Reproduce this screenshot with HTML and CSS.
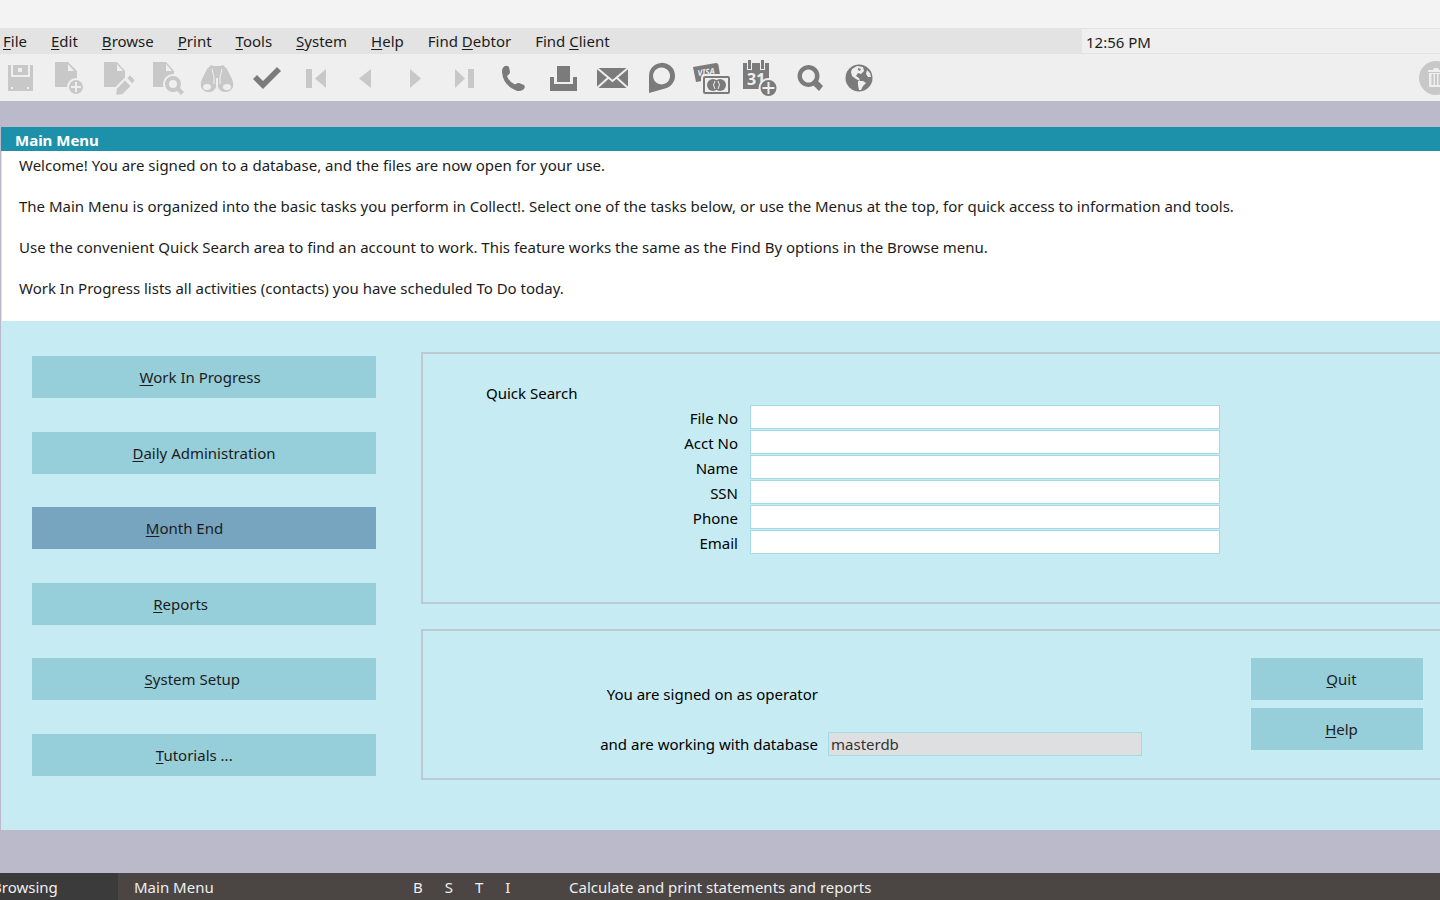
FILE: index.html
```html
<!DOCTYPE html>
<html lang="en">
  <head>
    <meta charset="UTF-8" />
    <meta name="viewport" content="width=device-width, initial-scale=1.0" />
    <title>Main Menu</title>
    <link rel="stylesheet" href="styles.css">
  </head>
  <body>
    <div class="caption"></div>

    <nav class="menu-bar">
      <div class="menu-items">
        <button><u>F</u>ile</button>
        <button><u>E</u>dit</button>
        <button><u>B</u>rowse</button>
        <button><u>P</u>rint</button>
        <button><u>T</u>ools</button>
        <button><u>S</u>ystem</button>
        <button><u>H</u>elp</button>
        <button>Find <u>D</u>ebtor</button>
        <button>Find <u>C</u>lient</button>
      </div>
      <div class="clock">12:56 PM</div>
    </nav>

    <div class="toolbar">
      <div class="tools">
        <button aria-label="Save" disabled>
          <svg viewBox="0 0 34 34">
            <path d="M5 4h25v26H5z" />
            <path class="line" d="M9 4v11h17V4" />
            <path class="bg" d="M15 7h4v4h-4zM8 26h2v2H8zM24 26h2v2h-2z" />
          </svg>
        </button>
        <button aria-label="New" disabled>
          <svg viewBox="0 0 34 34">
            <path d="M3 1h13l9 9v16H3z" />
            <path class="bg" d="M16 3v7h6z" />
            <circle class="edge" cx="24" cy="26" r="8" />
            <path class="line" d="M24 21v10M19 26h10" />
          </svg>
        </button>
        <button aria-label="Modify" disabled>
          <svg viewBox="0 0 34 34">
            <path d="M2 1h13l8 9v16H2z" />
            <path class="bg" d="M15 3v7h6z" />
            <path class="edge" d="M13 35l1-8 9-9 7 7-9 9zM24 17l4-4 6 6-4 5z" />
          </svg>
        </button>
        <button aria-label="View" disabled>
          <svg viewBox="0 0 34 34">
            <path d="M2 1h13l8 9v16H2z" />
            <path class="bg" d="M15 3v7h6z" />
            <circle class="edge" cx="22" cy="23" r="9" />
            <circle class="bg" cx="22" cy="23" r="4" />
            <path d="M28 26l5 5-3 3-5-5z" />
          </svg>
        </button>
        <button aria-label="Find" disabled>
          <svg viewBox="0 0 34 34">
            <path d="M7 8l4-4 5 2v17a7 6 0 0 1-15 3q-1-4 1-8zM27 8l-4-4-5 2v17a7 6 0 0 0 15 3q1-4-1-8z" />
            <path d="M13 5h8v12h-8z" />
            <path class="line thin" d="M12 8l2 8v7M22 8l-2 8v7" />
            <ellipse class="bg" cx="7" cy="26" rx="4" ry="3" />
            <ellipse class="bg" cx="27" cy="26" rx="4" ry="3" />
          </svg>
        </button>
        <button aria-label="Accept">
          <svg viewBox="0 0 34 34">
            <path d="M3 18l4-4 6 6L27 6l4 4-18 18z" />
          </svg>
        </button>
        <button aria-label="First" disabled>
          <svg viewBox="0 0 34 34">
            <path d="M7 8h6v19H7zM16 17.500L27 8v19z" />
          </svg>
        </button>
        <button aria-label="Previous" disabled>
          <svg viewBox="0 0 34 34">
            <path d="M11 17.500L23 8v19z" />
          </svg>
        </button>
        <button aria-label="Next" disabled>
          <svg viewBox="0 0 34 34">
            <path d="M23 17.500L12 8v19z" />
          </svg>
        </button>
        <button aria-label="Last" disabled>
          <svg viewBox="0 0 34 34">
            <path d="M21 8h6v19h-6zM18 17.500L8 8v19z" />
          </svg>
        </button>
        <button aria-label="Phone">
          <svg viewBox="0 0 34 34">
            <path d="M8 5.500Q11 4 13 6l1 5q0 2-3 4 2 6 8 8.500 2-2 4-1.500l5 2q1.500 1.500 0 4-3 3-8 1.500Q7 24 6 11q0-4 2-5.500z" />
          </svg>
        </button>
        <button aria-label="Print">
          <svg viewBox="0 0 34 34">
            <path d="M4 16h27v14H4z" />
            <path class="bg" d="M8 14h19v9H8z" />
            <path d="M11 5h13v16H11z" />
          </svg>
        </button>
        <button aria-label="Email">
          <svg viewBox="0 0 34 34">
            <path d="M2 7h31v20H2z" />
            <path class="line" d="M2 7l15.500 13L33 7M2 27l11-10M33 27L22 17" />
          </svg>
        </button>
        <button aria-label="Chat">
          <svg viewBox="0 0 34 34">
            <path fill-rule="evenodd" d="M5 32V15A13 13 0 1 1 21 27.500zM17.500 6.500a8.500 8.500 0 1 0 .1 0z" />
          </svg>
        </button>
        <button aria-label="Payments">
          <svg viewBox="0 0 34 34">
            <path d="M-1 6l23-4q2 0 2.500 2l2 13L2 21z" />
            <text class="card-text" x="4" y="15" transform="rotate(-8 4 15)">VISA</text>
            <rect class="edge" x="8" y="14" width="29" height="20" rx="3" />
            <rect class="bg" x="11" y="17" width="23" height="14" />
            <circle cx="19" cy="24" r="6" />
            <circle cx="26" cy="24" r="6" />
            <path class="line thin" d="M21 20q-3 4 0 8M24 20q3 4 0 8" />
          </svg>
        </button>
        <button aria-label="Calendar">
          <svg viewBox="0 0 34 34">
            <path d="M0 2h26v26H0z" />
            <path class="bg" d="M4 1h5v8H4zM17 1h5v8h-5z" />
            <path d="M5-1h3v9H5zM18-1h3v9h-3z" />
            <text class="day-text" x="4" y="24">31</text>
            <circle class="edge" cx="25.500" cy="27" r="9" />
            <path class="line" d="M25.500 21v12M19.500 27h12" />
          </svg>
        </button>
        <button aria-label="Search">
          <svg viewBox="0 0 34 34">
            <path fill-rule="evenodd" d="M15.500 4a11 11 0 1 0 .1 0zM15.500 8.500a6.500 6.500 0 1 1-.1 0z" />
            <path d="M24 19l6 6-4 5-7-7z" />
          </svg>
        </button>
        <button aria-label="Web">
          <svg viewBox="0 0 34 34">
            <circle cx="17" cy="17" r="13.500" />
            <path class="bg" d="M10 8l5-3 6 1 1 4-3 3-3-1-2 3 3 2 1 3-4-2-4-3-1-4zM16 20l5 0 3 2-3 3-2 4-2 0-1-5zM25 9l3 3 1 4-3 0-2-3z" />
            <path d="M16 7l3 1-1 2-2-1z" />
          </svg>
        </button>
      </div>
      <button class="trash" aria-label="Delete" disabled>
        <svg viewBox="0 0 34 34">
          <circle cx="17" cy="17" r="17" />
          <path class="bg" d="M9 9h5l1-2h4l1 2h5v2H9zM10 12h14v14H10z" />
          <path class="rib" d="M13.500 13v11M17 13v11M20.500 13v11" />
        </svg>
      </button>
    </div>

    <main class="workspace">
      <section class="window">
        <h1>Main Menu</h1>
        <div class="intro">
          <p>Welcome! You are signed on to a database, and the files are now open for your use.</p>
          <p>The Main Menu is organized into the basic tasks you perform in Collect!. Select one of the tasks below, or use the Menus at the top, for quick access to information and tools.</p>
          <p>Use the convenient Quick Search area to find an account to work. This feature works the same as the Find By options in the Browse menu.</p>
          <p>Work In Progress lists all activities (contacts) you have scheduled To Do today.</p>
        </div>

        <div class="content">
          <!-- labels are padded with trailing spaces, so they sit left of centre -->
          <div class="tasks">
            <button class="btn"><u>W</u>ork In Progress&nbsp;&nbsp;</button>
            <button class="btn"><u>D</u>aily Administration</button>
            <button class="btn active"><u>M</u>onth End&nbsp;&nbsp;&nbsp;&nbsp;&nbsp;&nbsp;&nbsp;&nbsp;&nbsp;&nbsp;</button>
            <button class="btn"><u>R</u>eports&nbsp;&nbsp;&nbsp;&nbsp;&nbsp;&nbsp;&nbsp;&nbsp;&nbsp;&nbsp;&nbsp;&nbsp;</button>
            <button class="btn"><u>S</u>ystem Setup&nbsp;&nbsp;&nbsp;&nbsp;&nbsp;&nbsp;</button>
            <button class="btn"><u>T</u>utorials ...&nbsp;&nbsp;&nbsp;&nbsp;&nbsp;</button>
          </div>

          <div class="panels">
            <form class="panel search">
              <h2>Quick Search</h2>
              <div class="fields">
                <label for="fileNo">File No</label>
                <input type="text" id="fileNo" />
                <label for="acctNo">Acct No</label>
                <input type="text" id="acctNo" />
                <label for="name">Name</label>
                <input type="text" id="name" />
                <label for="ssn">SSN</label>
                <input type="text" id="ssn" />
                <label for="phone">Phone</label>
                <input type="text" id="phone" />
                <label for="email">Email</label>
                <input type="text" id="email" />
              </div>
            </form>

            <div class="panel session">
              <div class="session-info">
                <span>You are signed on as operator</span>
                <span></span>
                <label for="database">and are working with database</label>
                <input type="text" id="database" value="masterdb" readonly />
              </div>
              <div class="session-buttons">
                <button class="btn"><u>Q</u>uit</button>
                <button class="btn"><u>H</u>elp</button>
              </div>
            </div>
          </div>
        </div>
      </section>
    </main>

    <footer class="status-bar">
      <div class="mode">Browsing</div>
      <div class="form-name">Main Menu</div>
      <div class="flags">
        <span>B</span><span>S</span><span>T</span><span>I</span>
      </div>
      <div class="hint">Calculate and print statements and reports</div>
    </footer>
  </body>
</html>
```

FILE: styles.css
```css
* {
  box-sizing: border-box;
}
body {
  margin: 0;
  min-height: 100vh;
  display: flex;
  flex-direction: column;
  overflow-x: hidden;
  background-color: #bbbaca;
  color: #1c1c1c;
  font-family: "Noto Sans", "Open Sans", sans-serif;
  font-size: 15px;
  line-height: 20px;
}
button,
input {
  font: inherit;
  color: inherit;
}
button {
  border: none;
  padding: 0;
  background: none;
}
h1,
h2,
p {
  margin: 0;
}
u {
  text-underline-offset: 2px;
}
.caption {
  height: 28px;
  background-color: #f3f3f3;
}

/* menu */
.menu-bar {
  display: flex;
  height: 26px;
  background-color: #e3e3e3;
}
.menu-items {
  flex: 1;
  display: flex;
  align-items: center;
  gap: 24px;
  padding-left: 3px;
}
.clock {
  width: 358px;
  padding: 3px 4px;
  background-color: #efefef;
  border: 1px solid #e3e3e3;
  border-width: 1px 0;
}

/* toolbar */
.toolbar {
  display: flex;
  align-items: center;
  justify-content: space-between;
  height: 47px;
  background-color: #efefef;
  overflow: hidden;
}
.tools {
  display: flex;
  justify-content: space-between;
  width: 879px;
}
.tools button {
  width: 40px;
  height: 34px;
}
.toolbar svg {
  display: block;
  width: 34px;
  height: 34px;
  margin: 0 auto;
  overflow: visible;
  fill: #7b7b7b;
  stroke-width: 2;
}
.toolbar button:disabled svg {
  fill: #c8c8c8;
}
.toolbar .bg {
  fill: #efefef;
}
.toolbar .line {
  fill: none;
  stroke: #efefef;
}
.toolbar .thin {
  stroke-width: 1;
}
.toolbar .edge {
  stroke: #efefef;
}
.card-text,
.day-text {
  fill: #efefef;
  font-weight: bold;
}
.card-text {
  font-size: 8px;
  font-style: italic;
}
.day-text {
  font-size: 16px;
}
.trash {
  margin-right: -13px;
}
.trash .rib {
  stroke: #c8c8c8;
}

/* main window */
.workspace {
  flex: 1;
  display: flex;
  padding: 26px 0 43px 1px;
}
.window {
  flex: 1;
  display: flex;
  flex-direction: column;
  background-color: #c6ebf2;
}
.window h1 {
  height: 24px;
  padding: 3px 14px;
  background-color: #1d91aa;
  color: #fff;
  font-size: 15px;
  line-height: 20px;
}
.intro {
  display: flex;
  flex-direction: column;
  gap: 21px;
  margin-left: 1px;
  padding: 4px 17px 23px;
  background-color: #fff;
}
.content {
  flex: 1;
  display: flex;
  gap: 45px;
  padding: 31px 0 50px 31px;
}
.tasks {
  display: flex;
  flex-direction: column;
  justify-content: space-between;
  width: 344px;
  padding: 4px 0;
}
.btn {
  height: 42px;
  background-color: #96ced9;
}
.btn.active {
  background-color: #77a5bf;
}
.panels {
  flex: 1;
  display: flex;
  flex-direction: column;
  justify-content: space-between;
  color: #000;
}
.panel {
  border: 2px solid #bccbd0;
  border-right: none;
}
.search {
  height: 252px;
  padding: 29px 220px 0 63px;
}
.search h2 {
  font-size: 15px;
  font-weight: normal;
}
.fields {
  display: grid;
  grid-template-columns: 252px 1fr;
  grid-auto-rows: 24px;
  gap: 1px 12px;
  margin-top: 2px;
}
.fields label {
  padding-top: 3px;
}
.fields label,
.session-info {
  text-align: right;
}
.panel input {
  width: 100%;
  height: 24px;
  padding: 0 2px;
  border: 1px solid #a3dae6;
  background-color: #fff;
}
.session {
  display: flex;
  justify-content: space-between;
  height: 151px;
  padding: 27px 17px 27px 169px;
}
.session-info {
  display: grid;
  grid-template-columns: 226px 314px;
  grid-auto-rows: 24px;
  gap: 26px 10px;
  align-items: center;
  padding-top: 24px;
  white-space: nowrap;
}
.panel.session input {
  background-color: #dedfe0;
  color: #333;
}
.session-buttons {
  display: flex;
  flex-direction: column;
  gap: 8px;
  width: 172px;
  color: #1c1c1c;
}
.session-buttons .btn {
  padding-left: 9px;
}

/* status bar */
.status-bar {
  display: flex;
  height: 27px;
  line-height: 29px;
  overflow: hidden;
  background-color: #4b4644;
  color: #efefef;
}
.mode {
  width: 118px;
  text-indent: -8px;
  background-color: #3b3b3b;
}
.form-name {
  width: 295px;
  padding-left: 16px;
}
.flags {
  display: flex;
  gap: 22px;
  width: 156px;
}
```
